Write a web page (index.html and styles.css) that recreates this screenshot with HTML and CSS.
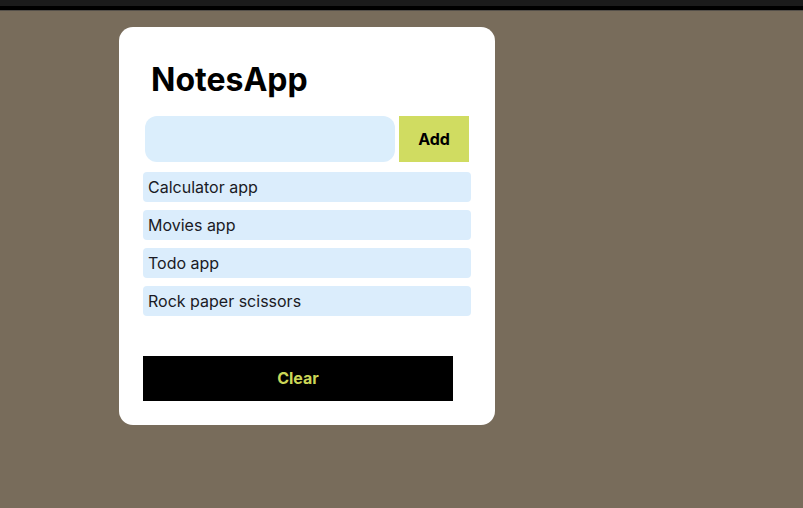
FILE: index.html
```html
<!DOCTYPE html>
<html>
<head>
<meta charset="utf-8">
<link rel="stylesheet" href="styles.css">
</head>
<body>
<div class="topbar"><div class="tb-dark"></div><div class="tb-black"></div><div class="tb-line"></div></div>
<main class="card">
  <h1 class="title">NotesApp</h1>
  <div class="form-row">
    <input class="note-input" type="text">
    <button class="add-btn">Add</button>
  </div>
  <ul class="notes">
    <li class="note">Calculator app</li>
    <li class="note">Movies app</li>
    <li class="note">Todo app</li>
    <li class="note">Rock paper scissors</li>
  </ul>
  <button class="clear-btn">Clear</button>
</main>
</body>
</html>
```
FILE: styles.css
```css
html, body {
  margin: 0;
  padding: 0;
  background: #786c5b;
  font-family: Inter, "Noto Sans", sans-serif;
}
.topbar { display: flex; flex-direction: column; }
.tb-dark { height: 6px; background: #1b1b1b; }
.tb-black { height: 4px; background: #000; }
.tb-line { height: 1px; background: #55504a; }
.card {
  box-sizing: border-box;
  width: 376px;
  margin: 16px 0 0 119px;
  padding: 24px;
  background: #fff;
  border-radius: 14px;
}
.title {
  margin: 9px 0 17px 8px;
  font-size: 32px;
  line-height: 39px;
  font-weight: 700;
  color: #000;
}
.form-row {
  display: flex;
  gap: 4px;
  margin-left: 2px;
  height: 46px;
}
.note-input {
  box-sizing: border-box;
  width: 250px;
  height: 46px;
  border: none;
  outline: none;
  border-radius: 12px;
  background: #dbeefc;
  font-family: inherit;
  font-size: 16px;
  padding: 0 10px;
}
.add-btn {
  width: 70px;
  height: 46px;
  border: none;
  background: #d0dc61;
  font-family: inherit;
  font-weight: 700;
  font-size: 16px;
  color: #000;
  padding: 0;
}
.notes {
  list-style: none;
  margin: 10px 0 0;
  padding: 0;
  display: flex;
  flex-direction: column;
  gap: 8px;
}
.note {
  height: 30px;
  line-height: 30px;
  padding-left: 5px;
  background: #dbedfc;
  border-radius: 4px;
  font-size: 16px;
  color: #1a1a24;
}
.clear-btn {
  display: block;
  margin-top: 40px;
  width: 310px;
  height: 45px;
  border: none;
  background: #000;
  color: #cbd657;
  font-family: inherit;
  font-weight: 700;
  font-size: 16px;
  padding: 0 0 2px;
}
```
